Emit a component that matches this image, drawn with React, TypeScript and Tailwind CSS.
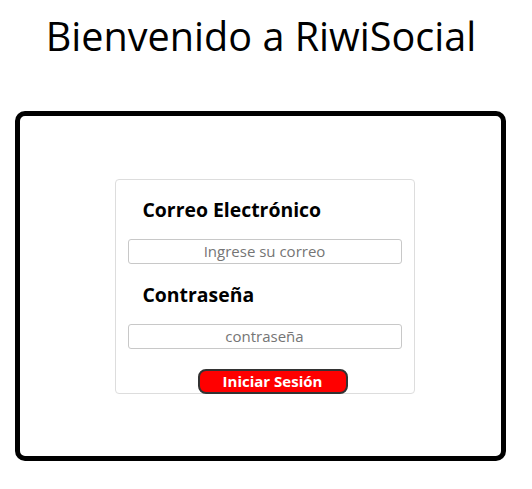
export default function App() {
  return (
    <div className="min-h-[489px] bg-white font-['Open_Sans',sans-serif] text-black">
      <h1 className="pt-[9px] pr-[10px] text-center text-[39.6px] leading-[54px] font-medium">Bienvenido a RiwiSocial</h1>
      <div className="mt-[48px] ml-[15px] flex h-[350px] w-[491px] items-center justify-center rounded-[10px] border-[5px] border-black pl-[8px]">
        <form className="flex w-[300px] flex-col items-center rounded-[4px] border border-[#dddddd] pt-[16px]">
          <label className="self-start pl-[27px] text-[19.4px] font-bold leading-[28px]">Correo Electrónico</label>
          <input
            className="mt-[15px] h-[25px] w-[274px] rounded-[3px] border border-[#c8c8c8] text-center text-[15px] placeholder:text-[#757575] outline-none"
            placeholder="Ingrese su correo"
          />
          <label className="mt-[17px] self-start pl-[27px] text-[19.4px] font-bold leading-[28px]">Contraseña</label>
          <input
            type="password"
            className="mt-[15px] h-[25px] w-[274px] rounded-[3px] border border-[#c8c8c8] text-center text-[15px] placeholder:text-[#757575] outline-none"
            placeholder="contraseña"
          />
          <button
            type="button"
            className="mt-[20px] ml-[16px] -mb-[1px] h-[25px] w-[150px] rounded-[8px] border-2 border-[#333333] bg-[#ff0000] text-[15px] font-bold leading-[20px] text-white"
          >
            Iniciar Sesión
          </button>
        </form>
      </div>
    </div>
  );
}
